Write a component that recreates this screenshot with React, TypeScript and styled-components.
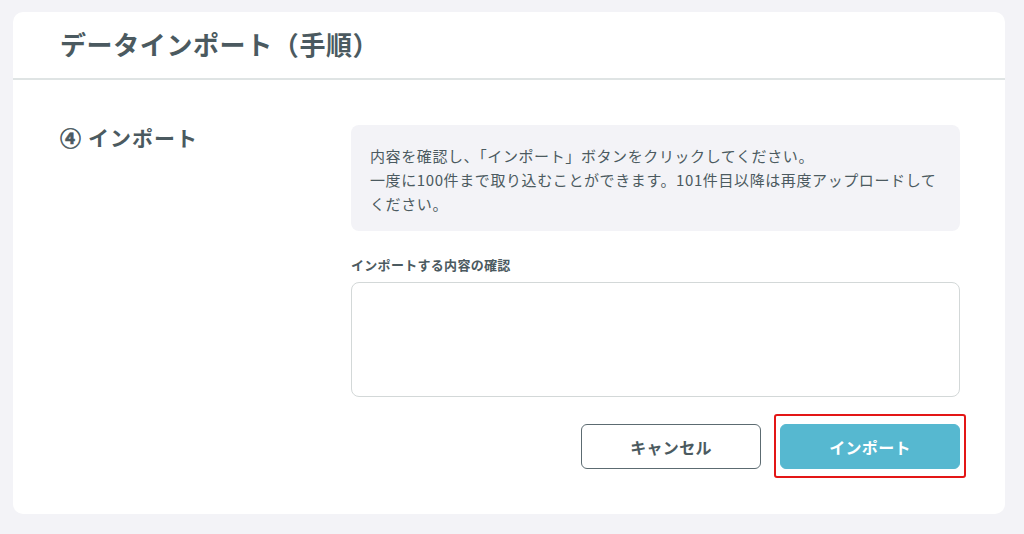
import styled, { createGlobalStyle } from "styled-components"

const GlobalStyle = createGlobalStyle`
    body {
        margin: 0;
        background: #f3f3f7;
        font-family: "Noto Sans CJK JP", "Noto Sans", sans-serif;
        color: #4b5a60;
    }
`

const App = () => {
    return (
        <>
            <GlobalStyle />
            <Page>
                <Card>
                    <CardHeader>
                        <h1>データインポート（手順）</h1>
                    </CardHeader>
                    <CardBody>
                        <StepTitle>
                            <StepNumber>④</StepNumber>インポート
                        </StepTitle>
                        <StepContent>
                            <InfoBox>
                                内容を確認し、「インポート」ボタンをクリックしてください。
                                <br />
                                一度に100件まで取り込むことができます。101件目以降は再度アップロードしてください。
                            </InfoBox>
                            <Field>
                                <label>インポートする内容の確認</label>
                                <TextArea readOnly />
                            </Field>
                            <Actions>
                                <Button variant="outline">キャンセル</Button>
                                <Highlight>
                                    <Button variant="primary">インポート</Button>
                                </Highlight>
                            </Actions>
                        </StepContent>
                    </CardBody>
                </Card>
            </Page>
        </>
    )
}

const Page = styled.div`
    padding: 12px 19px 20px 13px;
`

const Card = styled.div`
    background: #fff;
    border-radius: 10px;
    height: 502px;
    box-sizing: border-box;
`

const CardHeader = styled.div`
    height: 66px;
    display: flex;
    align-items: center;
    padding: 0 47px;
    border-bottom: 2px solid #dfe4e4;

    h1 {
        margin: 0 0 4px;
        font-size: 26px;
        font-weight: 700;
        letter-spacing: 0.6px;
        color: #4b5a60;
    }
`

const CardBody = styled.div`
    display: grid;
    grid-template-columns: 291px 609px;
    padding: 45px 45px 0 47px;
`

const StepTitle = styled.h2`
    margin: -2px 0 0;
    font-size: 21px;
    font-weight: 700;
    line-height: 28px;
    letter-spacing: 1px;
    color: #4b5a60;
`

const StepNumber = styled.span`
    display: inline-block;
    margin-right: 6px;
    -webkit-text-stroke: 0.6px #4b5a60;
`

const StepContent = styled.div`
    display: flex;
    flex-direction: column;
`

const InfoBox = styled.div`
    background: #f3f3f7;
    border-radius: 8px;
    padding: 19px 19px 15px 19px;
    font-size: 15px;
    line-height: 24px;
    letter-spacing: 0.6px;
    color: #4b5a60;
`

const Field = styled.div`
    display: flex;
    flex-direction: column;
    margin-top: 25px;
    gap: 8px;

    label {
        font-size: 13px;
        font-weight: 700;
        line-height: 18px;
        letter-spacing: 0.3px;
        color: #4b5a60;
    }
`

const TextArea = styled.textarea`
    height: 115px;
    box-sizing: border-box;
    border: 1px solid #d3d8d8;
    border-radius: 8px;
    resize: none;
    outline: none;
`

const Actions = styled.div`
    display: flex;
    justify-content: flex-end;
    gap: 19px;
    margin-top: 27px;
`

const Highlight = styled.div`
    position: relative;

    &::after {
        content: "";
        position: absolute;
        inset: -10px -6px -9px -6px;
        border: 2px solid #e31616;
        border-radius: 3px;
        pointer-events: none;
    }
`

const Button = styled.button<{ variant: "outline" | "primary" }>`
    width: 180px;
    height: 45px;
    box-sizing: border-box;
    border-radius: 6px;
    font-family: "Noto Sans CJK JP", "Noto Sans", sans-serif;
    font-size: 16px;
    font-weight: 700;
    letter-spacing: 0.3px;
    cursor: pointer;
    border: 1px solid ${({ variant }) => (variant === "outline" ? "#5c6b71" : "#56b8d0")};
    background: ${({ variant }) => (variant === "outline" ? "#fff" : "#56b8d0")};
    color: ${({ variant }) => (variant === "outline" ? "#4b5a60" : "#fff")};
`

export default App
